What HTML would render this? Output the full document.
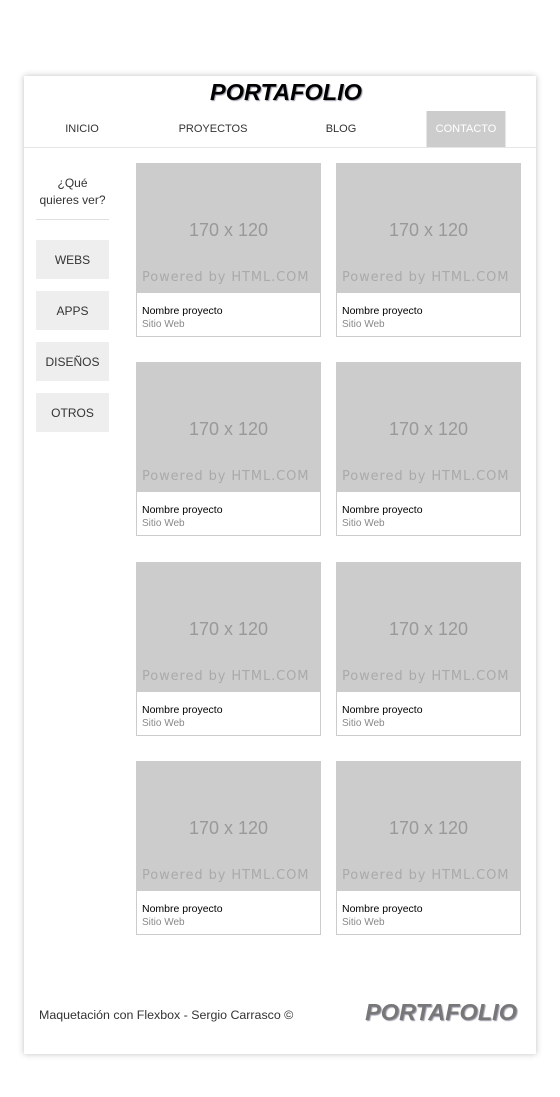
<!DOCTYPE html>
<html><head><meta charset="utf-8"><style>
*{box-sizing:border-box;margin:0;padding:0}
body{width:560px;height:1097px;background:#fff;font-family:"Liberation Sans",sans-serif;position:relative;overflow:hidden}
.wrap{position:absolute;left:24px;top:76px;width:512px;height:978px;background:#fff;box-shadow:0 0 6px rgba(0,0,0,.25)}
.title{position:absolute;left:6px;width:512px;top:3px;text-align:center;font:italic bold 23.5px "Liberation Sans",sans-serif;color:#000;text-shadow:1px 1px 1px #99a}
.nav{position:absolute;top:35px;left:0;width:512px;height:37px;border-bottom:1px solid #e6e6e6}
.nav span{position:absolute;top:0;height:36px;line-height:37px;font-size:11px;color:#333;transform:translateX(-50%)}
.nav .act{background:#ccc;color:#fff;width:79px;text-align:center}
.q{position:absolute;left:12px;width:73px;top:99px;text-align:center;font-size:12px;line-height:17px;color:#333}
.hr{position:absolute;left:12px;width:73px;top:143px;border-top:1px solid #e0e0e0}
.btn{position:absolute;left:12px;width:73px;height:39px;background:#eee;text-align:center;line-height:40px;font-size:12px;color:#333}
.card{position:absolute;width:185px;height:174px;border:1px solid #ccc;background:#fff}
.img{height:130px;background:#ccc;position:relative;margin:-1px -1px 0 -1px}
.img .s{position:absolute;top:57px;width:100%;text-align:center;font-size:18px;color:#999}
.img .p{position:absolute;top:107px;left:6px;font-family:"DejaVu Sans",sans-serif;font-size:13px;color:#aaa;letter-spacing:.9px}
.n{position:absolute;left:5px;top:141px;font-size:10.5px;color:#000}
.w{position:absolute;left:5px;top:155px;font-size:10px;color:#888}
.ft{position:absolute;left:15px;top:932px;font-size:12.4px;color:#333}
.fl{position:absolute;right:19px;top:923px;font:italic bold 23.5px "Liberation Sans",sans-serif;color:#777;text-shadow:1px 1px 1px #99a}
</style></head><body>
<div class="wrap">
<div class="title">PORTAFOLIO</div>
<div class="nav">
<span style="left:58px">INICIO</span>
<span style="left:189px">PROYECTOS</span>
<span style="left:317px">BLOG</span>
<span class="act" style="left:442px">CONTACTO</span>
</div>
<div class="q">¿Qué<br>quieres ver?</div>
<div class="hr"></div>
<div class="btn" style="top:164px">WEBS</div>
<div class="btn" style="top:215px">APPS</div>
<div class="btn" style="top:266px">DISEÑOS</div>
<div class="btn" style="top:317px">OTROS</div>

<div class="card" style="left:112px;top:87px"><div class="img"><div class="s">170 x 120</div><div class="p">Powered by HTML.COM</div></div><div class="n">Nombre proyecto</div><div class="w">Sitio Web</div></div>
<div class="card" style="left:312px;top:87px"><div class="img"><div class="s">170 x 120</div><div class="p">Powered by HTML.COM</div></div><div class="n">Nombre proyecto</div><div class="w">Sitio Web</div></div>
<div class="card" style="left:112px;top:286px"><div class="img"><div class="s">170 x 120</div><div class="p">Powered by HTML.COM</div></div><div class="n">Nombre proyecto</div><div class="w">Sitio Web</div></div>
<div class="card" style="left:312px;top:286px"><div class="img"><div class="s">170 x 120</div><div class="p">Powered by HTML.COM</div></div><div class="n">Nombre proyecto</div><div class="w">Sitio Web</div></div>
<div class="card" style="left:112px;top:486px"><div class="img"><div class="s">170 x 120</div><div class="p">Powered by HTML.COM</div></div><div class="n">Nombre proyecto</div><div class="w">Sitio Web</div></div>
<div class="card" style="left:312px;top:486px"><div class="img"><div class="s">170 x 120</div><div class="p">Powered by HTML.COM</div></div><div class="n">Nombre proyecto</div><div class="w">Sitio Web</div></div>
<div class="card" style="left:112px;top:685px"><div class="img"><div class="s">170 x 120</div><div class="p">Powered by HTML.COM</div></div><div class="n">Nombre proyecto</div><div class="w">Sitio Web</div></div>
<div class="card" style="left:312px;top:685px"><div class="img"><div class="s">170 x 120</div><div class="p">Powered by HTML.COM</div></div><div class="n">Nombre proyecto</div><div class="w">Sitio Web</div></div>

<div class="ft">Maquetación con Flexbox - Sergio Carrasco ©</div>
<div class="fl">PORTAFOLIO</div>
</div>
</body></html>
